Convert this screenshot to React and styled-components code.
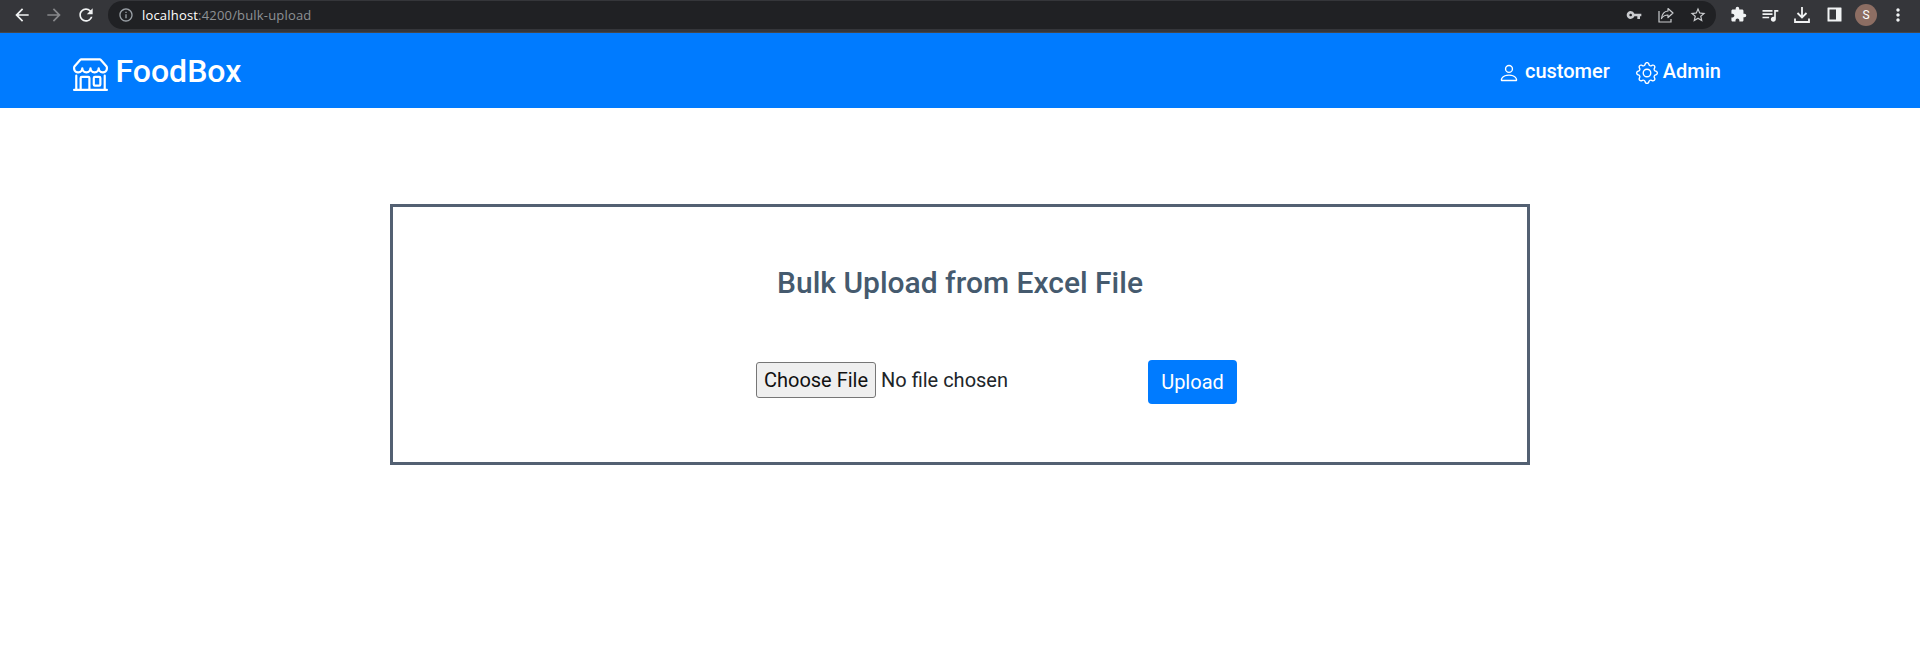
import React from "react";
import styled, { createGlobalStyle } from "styled-components";
import { BsShop, BsPerson, BsGear } from "react-icons/bs";
import {
  MdArrowBack,
  MdArrowForward,
  MdRefresh,
  MdInfoOutline,
  MdVpnKey,
  MdStarOutline,
  MdExtension,
  MdQueueMusic,
  MdMoreVert,
} from "react-icons/md";

const GlobalStyle = createGlobalStyle`
  *, *::before, *::after { box-sizing: border-box; }
  body {
    margin: 0;
    background: #fff;
    color: #212529;
    font-family: Roboto, "Liberation Sans", sans-serif;
  }
  svg { display: block; flex: none; }
`;

const BrowserBar = styled.div`
  display: flex;
  align-items: center;
  height: 33px;
  padding: 0 0 3px 12px;
  background: #35363a;
  border-bottom: 1px solid #45464a;
`;

const NavButtons = styled.div`
  display: flex;
  align-items: center;
  gap: 12px;
  width: 96px;
  color: #f1f3f4;
`;

const MutedIcon = styled.span`
  color: #87888b;
`;

const AddressBar = styled.div`
  display: flex;
  align-items: center;
  width: 1608px;
  height: 28px;
  padding: 0 2px 0 10px;
  border-radius: 14px;
  background: #202124;
  color: #9aa0a6;
`;

const Url = styled.span`
  flex: 1;
  margin-left: 8px;
  color: #8e9195;
  font: 13px/18px "Open Sans", "Noto Sans", sans-serif;
  letter-spacing: 0.18px;
`;

const Host = styled.span`
  color: #fff;
`;

const IconGroup = styled.div`
  display: flex;
  align-items: center;
  margin-left: ${(p) => p.$offset || 0}px;
  color: ${(p) => p.$color};
`;

const IconSlot = styled.span`
  display: flex;
  align-items: center;
  justify-content: center;
  width: 32px;
  height: 28px;
`;

const Avatar = styled.span`
  display: flex;
  align-items: center;
  justify-content: center;
  width: 22px;
  height: 22px;
  border-radius: 50%;
  background: #8d6e63;
  color: #fff;
  font-size: 12px;
`;

const Navbar = styled.header`
  display: flex;
  align-items: center;
  justify-content: space-between;
  height: 75px;
  padding: 0 199px 0 73px;
  background: #007bff;
  color: #fff;
`;

const Brand = styled.a`
  display: flex;
  align-items: center;
  gap: 7.5px;
  font-size: 32px;
  font-weight: 500;
  line-height: 38px;

  svg { margin-top: 6px; }
  span { margin-top: 1px; }
`;

const NavLinks = styled.nav`
  display: flex;
  gap: 26px;
`;

const NavLink = styled.a`
  display: flex;
  align-items: center;
  gap: 5px;
  font-size: 20px;
  font-weight: 500;
  line-height: 24px;

  svg { margin-top: 4px; }
  span { margin-top: 1px; }
`;

const UploadCard = styled.main`
  display: flex;
  flex-direction: column;
  align-items: center;
  width: 1140px;
  height: 261px;
  margin: 96px auto 0;
  padding-top: 58px;
  border: 3px solid #536072;
`;

const Title = styled.h2`
  margin: 0;
  color: #455a6e;
  font-size: 30px;
  font-weight: 500;
  line-height: 36px;
`;

const UploadForm = styled.form`
  display: flex;
  align-items: flex-start;
  width: 481px;
  margin: 59px 0 0 73px;
`;

const FileField = styled.div`
  display: flex;
  align-items: center;
  gap: 5px;
  width: 392px;
  margin-top: 2px;
  color: #212529;
  font-size: 20px;
`;

const ChooseButton = styled.button`
  width: 120px;
  height: 36px;
  padding: 0;
  border: 1px solid #767676;
  border-radius: 3px;
  background: #efefef;
  color: #111;
  font: 20px/24px Roboto, sans-serif;
  white-space: nowrap;
`;

const UploadButton = styled.button`
  width: 89px;
  height: 44px;
  padding: 0;
  border: 0;
  border-radius: 4px;
  background: #007bff;
  color: #fff;
  font: 20px/30px Roboto, sans-serif;
`;

function ShareIcon() {
  return (
    <svg width="16" height="16" viewBox="0 0 16 16" fill="none" stroke="currentColor" strokeWidth="1.2">
      <path d="M1 4v11h12v-3" />
      <path d="M10 1.500L15 6l-5 4.500V8C7 8 5 9 3.500 11.500 4 7 6.500 4.300 10 4z" strokeLinejoin="round" />
    </svg>
  );
}

function DownloadIcon() {
  return (
    <svg width="16" height="16" viewBox="0 0 16 16" fill="none" stroke="currentColor" strokeWidth="1.800">
      <path d="M8 0v10M3.500 6L8 10.500 12.500 6M1 11.500V15h14v-3.500" />
    </svg>
  );
}

function SidePanelIcon() {
  return (
    <svg width="15" height="15" viewBox="0 0 15 15" fill="currentColor">
      <path fillRule="evenodd" d="M1 .5h13a.5.5 0 0 1 .5.5v13a.5.5 0 0 1-.5.5H1a.5.5 0 0 1-.5-.5V1A.5.5 0 0 1 1 .5zM2.500 2.500v10H9v-10z" />
    </svg>
  );
}

export default function App() {
  return (
    <>
      <GlobalStyle />
      <BrowserBar>
        <NavButtons>
          <MdArrowBack size={20} />
          <MutedIcon><MdArrowForward size={20} /></MutedIcon>
          <MdRefresh size={20} />
        </NavButtons>
        <AddressBar>
          <MdInfoOutline size={16} />
          <Url><Host>localhost</Host>:4200/bulk-upload</Url>
          <IconGroup $color="#c9cbce">
            <IconSlot><MdVpnKey size={16} /></IconSlot>
            <IconSlot><ShareIcon /></IconSlot>
            <IconSlot><MdStarOutline size={18} /></IconSlot>
          </IconGroup>
        </AddressBar>
        <IconGroup $color="#f1f3f4" $offset={6}>
          <IconSlot><MdExtension size={17} /></IconSlot>
          <IconSlot><MdQueueMusic size={20} /></IconSlot>
          <IconSlot><DownloadIcon /></IconSlot>
          <IconSlot><SidePanelIcon /></IconSlot>
          <IconSlot><Avatar>S</Avatar></IconSlot>
          <IconSlot><MdMoreVert size={20} /></IconSlot>
        </IconGroup>
      </BrowserBar>
      <Navbar>
        <Brand>
          <BsShop size={35} />
          <span>FoodBox</span>
        </Brand>
        <NavLinks>
          <NavLink>
            <BsPerson size={22} />
            <span>customer</span>
          </NavLink>
          <NavLink>
            <BsGear size={22} />
            <span>Admin</span>
          </NavLink>
        </NavLinks>
      </Navbar>
      <UploadCard>
        <Title>Bulk Upload from Excel File</Title>
        <UploadForm>
          <FileField>
            <ChooseButton type="button">Choose File</ChooseButton>
            <span>No file chosen</span>
          </FileField>
          <UploadButton type="button">Upload</UploadButton>
        </UploadForm>
      </UploadCard>
    </>
  );
}
